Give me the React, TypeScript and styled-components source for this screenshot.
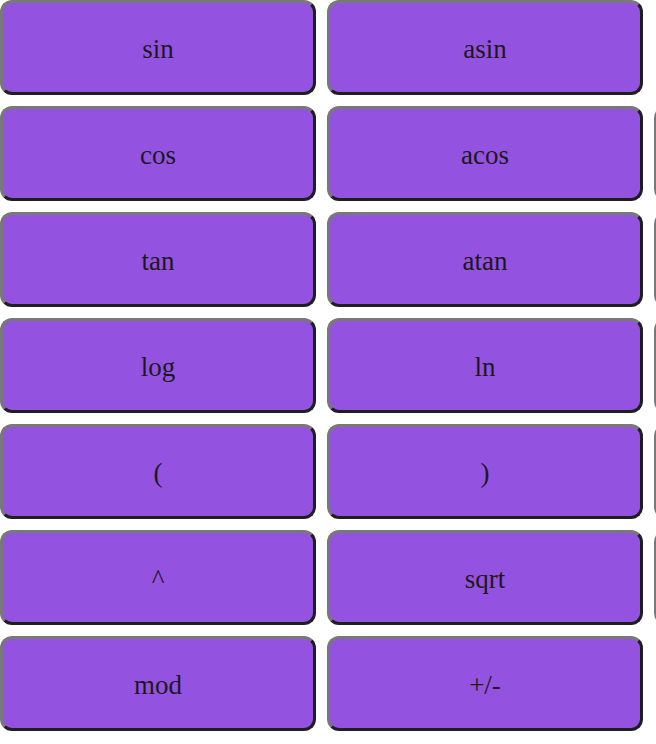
import React from "react";
import styled, { createGlobalStyle } from "styled-components";

const GlobalStyle = createGlobalStyle`
  html, body {
    margin: 0;
    padding: 0;
    background: #ffffff;
    overflow: hidden;
  }
  body {
    font-family: "Liberation Serif", "Times New Roman", serif;
  }
`;

const Viewport = styled.div`
  width: 100vw;
  height: 100vh;
  overflow: hidden;
`;

const Pad = styled.div`
  display: grid;
  grid-template-columns: repeat(3, 316px);
  grid-auto-rows: 95px;
  column-gap: 11px;
  row-gap: 11px;
  width: max-content;
`;

const Key = styled.button`
  box-sizing: border-box;
  display: flex;
  align-items: center;
  justify-content: center;
  width: 100%;
  height: 100%;
  margin: 0;
  padding: 3px 0 0 0;
  background: #9353e0;
  color: #1c1820;
  font-family: "Liberation Serif", "Times New Roman", serif;
  font-size: 27px;
  border-style: solid;
  border-width: 3px;
  border-color: #787878 #1f1f1f #1f1f1f #787878;
  border-radius: 12px;
  cursor: pointer;
`;

const Empty = styled.div``;

const rows: (string | null)[][] = [
  ["sin", "asin", null],
  ["cos", "acos", ""],
  ["tan", "atan", ""],
  ["log", "ln", ""],
  ["(", ")", ""],
  ["^", "sqrt", ""],
  ["mod", "+/-", null],
];

export default function App() {
  return (
    <>
      <GlobalStyle />
      <Viewport>
        <Pad>
          {rows.flatMap((row, r) =>
            row.map((label, c) =>
              label === null ? (
                <Empty key={`${r}-${c}`} />
              ) : (
                <Key key={`${r}-${c}`} type="button">
                  {label}
                </Key>
              )
            )
          )}
        </Pad>
      </Viewport>
    </>
  );
}
